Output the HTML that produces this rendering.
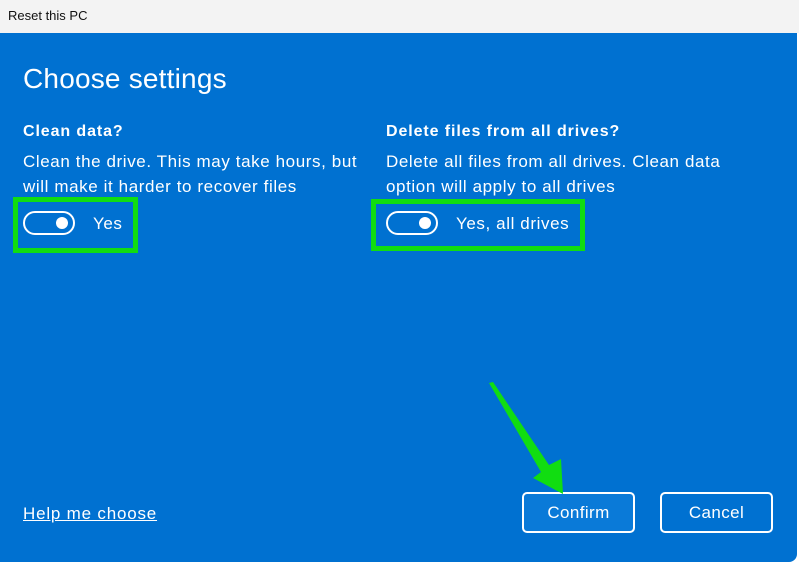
<!DOCTYPE html><html><head><style>
body{margin:0;width:799px;height:562px;overflow:hidden;background:#fff;font-family:"Liberation Sans",sans-serif;position:relative}
.tb{position:absolute;left:0;top:0;width:799px;height:33px;background:#f3f3f3;font-size:13px;color:#111}
.tb span{position:absolute;left:8px;top:8px}
.main{position:absolute;left:0;top:33px;width:797px;height:529px;background:#0071d1;border-bottom-right-radius:8px;color:#fff}
.a{position:absolute;white-space:nowrap}
.h1{font-size:28px;left:23px;top:30px;letter-spacing:0.2px}
.b{font-size:16px;font-weight:bold;letter-spacing:0.9px}
.t{font-size:17px;line-height:25px;letter-spacing:0.6px}
.g{position:absolute;border:5px solid #11dd11;box-sizing:border-box}
.tog{position:absolute;width:52px;height:24px;border:2px solid #fff;border-radius:14px;box-sizing:border-box}
.tog i{position:absolute;right:5px;top:4px;width:12px;height:12px;border-radius:50%;background:#fff}
.btn{position:absolute;top:459px;height:41px;border:2px solid #fff;border-radius:5px;box-sizing:border-box;font-size:17px;text-align:center;line-height:37px;letter-spacing:0.4px}
</style></head><body>
<div class="tb"><span>Reset this PC</span></div>
<div class="main">
<div class="a h1">Choose settings</div>
<div class="a b" style="left:23px;top:90px">Clean data?</div>
<div class="a t" style="left:23px;top:116px">Clean the drive. This may take hours, but<br>will make it harder to recover files</div>
<div class="g" style="left:13px;top:164px;width:125px;height:56px"></div>
<div class="tog" style="left:23px;top:178px"><i></i></div>
<div class="a t" style="left:93px;top:178px">Yes</div>
<div class="a b" style="left:386px;top:90px">Delete files from all drives?</div>
<div class="a t" style="left:386px;top:116px">Delete all files from all drives. Clean data<br>option will apply to all drives</div>
<div class="g" style="left:371px;top:166px;width:214px;height:52px"></div>
<div class="tog" style="left:386px;top:178px"><i></i></div>
<div class="a t" style="left:456px;top:178px">Yes, all drives</div>
<div class="a t" style="left:23px;top:468px;text-decoration:underline;letter-spacing:0.8px">Help me choose</div>
<div class="btn" style="left:522px;width:113px;background:#0a7ad8">Confirm</div>
<div class="btn" style="left:660px;width:113px">Cancel</div>
</div>
<svg style="position:absolute;left:0;top:0" width="799" height="562"><polygon points="489,383 493,382 549,465 561,459 563,494 533,478 541,472" fill="#11dd11"/></svg>
</body></html>
